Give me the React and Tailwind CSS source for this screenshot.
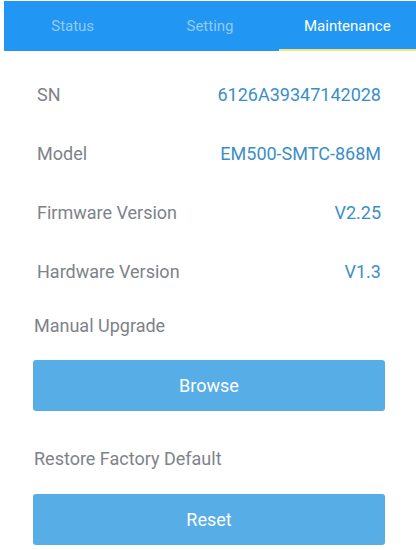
import React, { useState } from "react";

const tabs = ["Status", "Setting", "Maintenance"];

const info = [
  { label: "SN", value: "6126A39347142028" },
  { label: "Model", value: "EM500-SMTC-868M" },
  { label: "Firmware Version", value: "V2.25" },
  { label: "Hardware Version", value: "V1.3" },
];

export default function App() {
  const [tab, setTab] = useState("Maintenance");

  return (
    <div className="w-[416px] h-[550px] bg-white overflow-hidden font-['Roboto',sans-serif]">
      {/* Tab bar */}
      <div className="ml-1 mt-px h-[50px] bg-[#2196f3] flex">
        {tabs.map((t) => (
          <button
            key={t}
            onClick={() => setTab(t)}
            className={`flex-1 flex items-center justify-center pt-[2px] text-[15px] border-b-2 ${
              tab === t ? "text-white border-[#f3e57a]" : "text-[#93cbf6] border-transparent"
            }`}
          >
            {t}
          </button>
        ))}
      </div>

      {/* Device info */}
      <div className="pt-[14px] pl-[37px] pr-[35px]">
        {info.map((row) => (
          <div key={row.label} className="h-[59px] flex items-center justify-between text-[18px]">
            <span className="text-[#7d8389]">{row.label}</span>
            <span className="text-[#3b8fc7]">{row.value}</span>
          </div>
        ))}
      </div>

      {/* Actions */}
      <div className="pl-[33px] pr-[31px]">
        <p className="mt-[13px] h-[24px] leading-[24px] pl-px text-[18px] text-[#7d8389]">Manual Upgrade</p>
        <button className="mt-[22px] w-full h-[51px] rounded-[3px] bg-[#57ade6] text-white text-[18px]">
          Browse
        </button>
        <p className="mt-[36px] h-[24px] leading-[24px] pl-px text-[18px] text-[#7d8389]">Restore Factory Default</p>
        <button className="mt-[23px] w-full h-[51px] rounded-[3px] bg-[#57ade6] text-white text-[18px]">
          Reset
        </button>
      </div>
    </div>
  );
}
